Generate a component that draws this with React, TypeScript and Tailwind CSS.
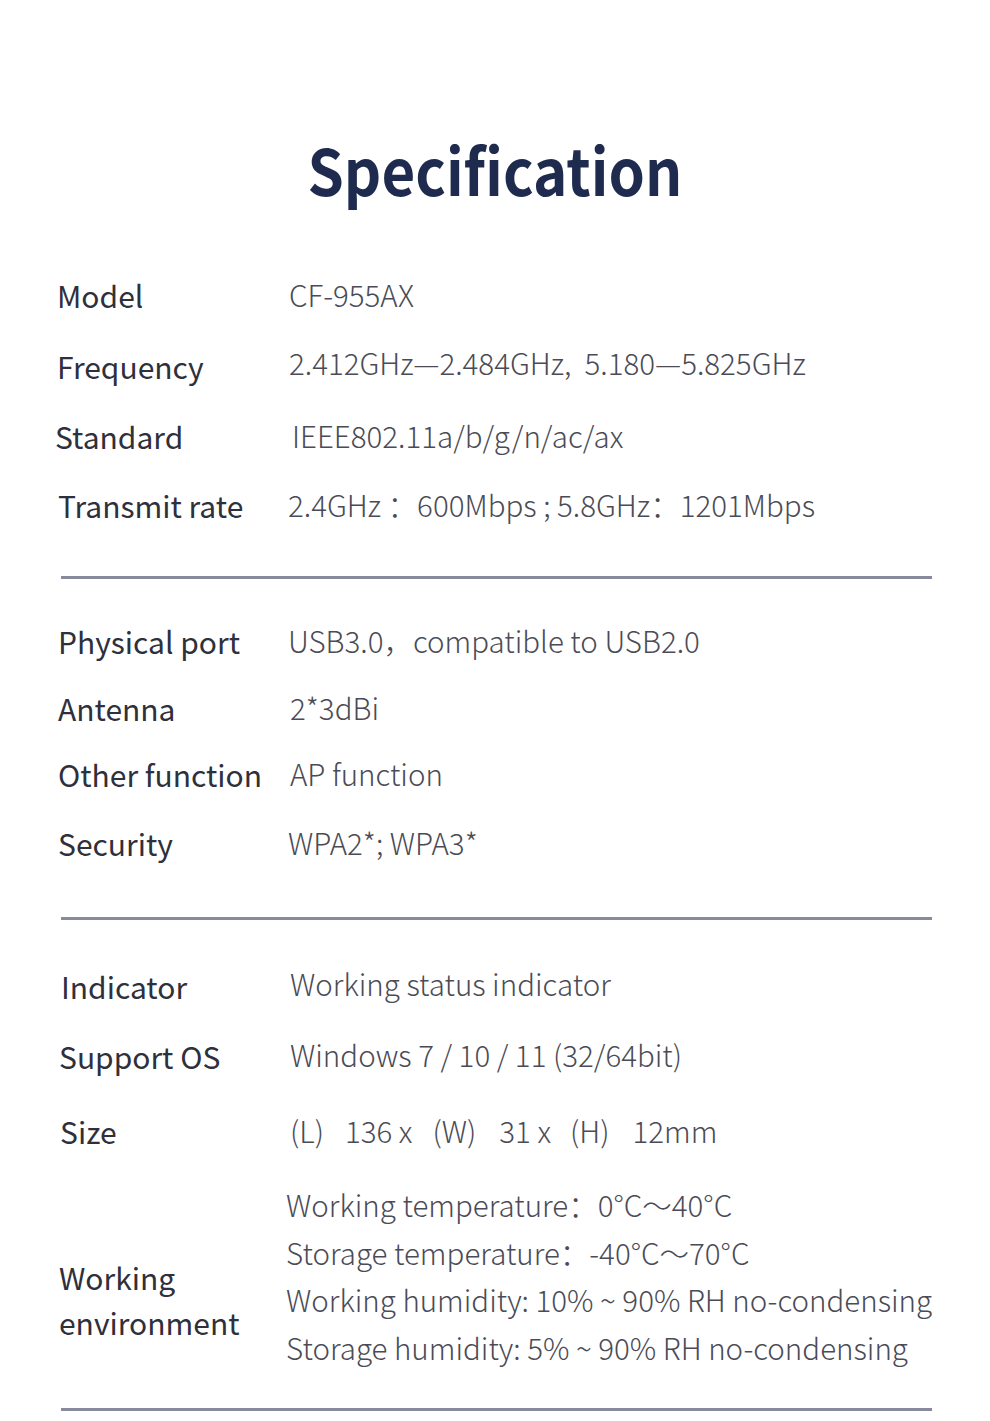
import React from "react";

interface Spec {
  label: string;
  value: React.ReactNode;
  row: string;
  lx: string;
  vx: string;
}

const font = { fontFamily: '"Noto Sans CJK SC", "Noto Sans", sans-serif' };

const sizeValue = (
  <span className="flex items-center">
    <span>(L)</span>
    <span className="ml-[21px]">136 x</span>
    <span className="ml-[20px]">(W)</span>
    <span className="ml-[23px]">31 x</span>
    <span className="ml-[19px]">(H)</span>
    <span className="ml-[23px]">12mm</span>
  </span>
);

const section1: Spec[] = [
  { label: "Model", value: "CF-955AX", row: "h-[71px]", lx: "pl-[57px]", vx: "pl-[289px]" },
  { label: "Frequency", value: "2.412GHz—2.484GHz,  5.180—5.825GHz", row: "h-[71px]", lx: "pl-[57px]", vx: "pl-[289px] -mt-[6px]" },
  { label: "Standard", value: "IEEE802.11a/b/g/n/ac/ax", row: "h-[70px]", lx: "pl-[55px]", vx: "pl-[292px]" },
  { label: "Transmit rate", value: "2.4GHz ：600Mbps ; 5.8GHz：1201Mbps", row: "h-[68px]", lx: "pl-[58px]", vx: "pl-[288px]" },
];

const section2: Spec[] = [
  { label: "Physical port", value: "USB3.0，compatible to USB2.0", row: "h-[68px]", lx: "pl-[58px]", vx: "pl-[288px]" },
  { label: "Antenna", value: "2*3dBi", row: "h-[66px]", lx: "pl-[58px]", vx: "pl-[290px]" },
  { label: "Other function", value: "AP function", row: "h-[66px]", lx: "pl-[58px]", vx: "pl-[290px]" },
  { label: "Security", value: "WPA2*; WPA3*", row: "h-[72px]", lx: "pl-[58px]", vx: "pl-[288px]" },
];

const section3: Spec[] = [
  { label: "Indicator", value: "Working status indicator", row: "h-[70px]", lx: "pl-[61px]", vx: "pl-[290px] -mt-[5px]" },
  { label: "Support OS", value: "Windows 7 / 10 / 11 (32/64bit)", row: "h-[70px]", lx: "pl-[59px]", vx: "pl-[290px] -mt-[3px]" },
  { label: "Size", value: sizeValue, row: "h-[80px]", lx: "pl-[60px]", vx: "pl-[290px]" },
];

const envLines = [
  "Working temperature：0°C～40°C",
  "Storage temperature：-40°C～70°C",
  "Working humidity: 10% ~ 90% RH no-condensing",
  "Storage humidity: 5% ~ 90% RH no-condensing",
];

const Row: React.FC<{ spec: Spec }> = ({ spec }) => (
  <div className={`relative flex items-center ${spec.row}`}>
    <div className={`absolute left-0 ${spec.lx} text-[30px] leading-none font-normal text-[#2e303b]`}>
      {spec.label}
    </div>
    <div className={`${spec.vx} text-[29.5px] leading-none font-light text-[#4a4b56] whitespace-pre`}>
      {spec.value}
    </div>
  </div>
);

const Divider: React.FC = () => (
  <div className="ml-[61px] w-[871px] h-[3px] bg-[#878a9c]" />
);

export default function App() {
  return (
    <div className="w-[990px] h-[1421px] bg-white overflow-hidden" style={font}>
      <div className="h-[259px] pt-[136px] flex justify-center">
        <h1 className="text-[64px] leading-none font-bold text-[#1e2b4f] scale-x-[0.91]">
          Specification
        </h1>
      </div>

      {section1.map((s) => (
        <Row key={s.label} spec={s} />
      ))}
      <div className="h-[37px]" />
      <Divider />

      <div className="h-[28px]" />
      {section2.map((s) => (
        <Row key={s.label} spec={s} />
      ))}
      <div className="h-[38px]" />
      <Divider />

      <div className="h-[31px]" />
      {section3.map((s) => (
        <Row key={s.label} spec={s} />
      ))}

      <div className="flex h-[237px]">
        <div className="w-[286px] shrink-0 pl-[59px] pt-[84px] text-[30px] leading-[45px] font-normal text-[#2e303b]">
          Working
          <br />
          environment
        </div>
        <div className="pt-[10px] flex flex-col text-[29.5px] leading-[47.7px] font-light text-[#4a4b56] whitespace-pre">
          {envLines.map((l) => (
            <div key={l}>{l}</div>
          ))}
        </div>
      </div>
      <Divider />
    </div>
  );
}
